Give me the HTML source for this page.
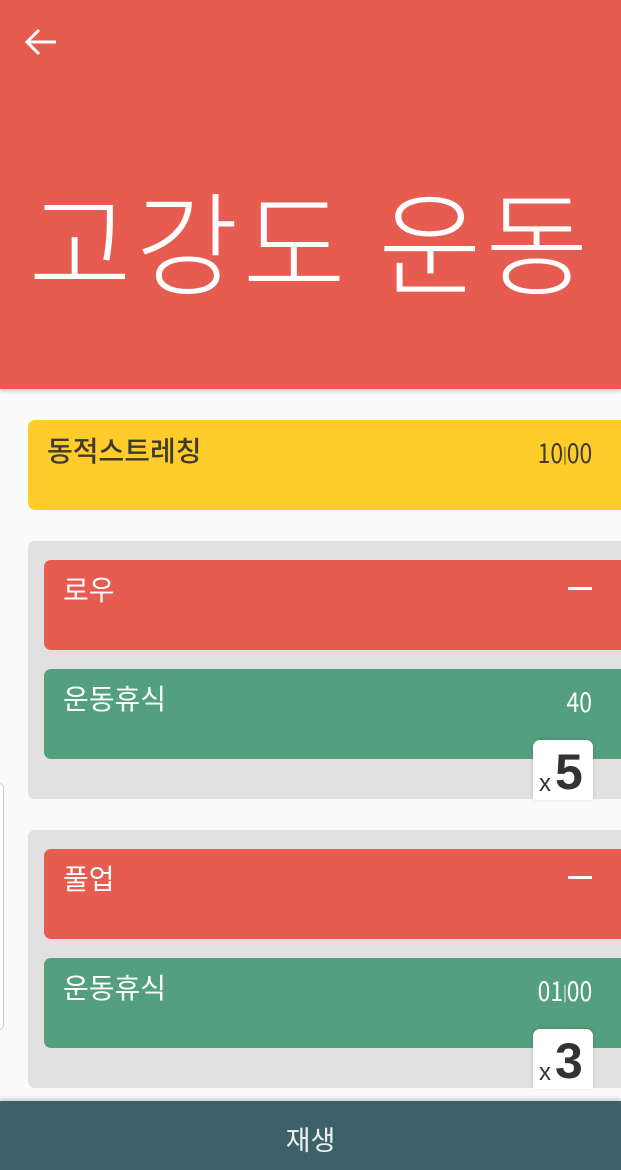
<!DOCTYPE html>
<html><head><meta charset="utf-8"><style>
*{margin:0;padding:0;box-sizing:border-box}
html,body{width:621px;height:1170px;overflow:hidden}
body{background:#fafafa;font-family:"Liberation Sans","Noto Sans CJK KR",sans-serif;position:relative}
.hdr{position:absolute;left:0;top:0;width:621px;height:389px;background:#e65c50;box-shadow:0 2px 4px rgba(0,0,0,.2)}
.title{position:absolute;left:0;width:621px;top:168px;text-align:center;color:#fff;font-size:112px;font-weight:300;line-height:140px;letter-spacing:4px;font-family:"Noto Sans CJK KR",sans-serif}
.card{position:absolute;border-radius:7px;color:#fff;font-size:28px;font-family:"Noto Sans CJK KR",sans-serif}
.card .n{position:absolute;left:19px;top:9px;font-weight:400}
.card .t{position:absolute;right:28px;top:12px;font-size:27px;font-weight:400;font-family:"Liberation Sans Narrow","Noto Sans CJK KR",sans-serif;transform:scaleX(.85);transform-origin:right}
.grp{position:absolute;left:28px;width:600px;height:258px;background:#e1e1e1;border-radius:7px}
.badge{position:absolute;left:533px;width:60px;height:60px;background:#fff;border-radius:7px 7px 0 0;box-shadow:0 -1px 4px rgba(0,0,0,.15);color:#333;font-family:"Liberation Sans",sans-serif}
.badge .x{position:absolute;left:6px;bottom:2px;font-size:24px}
.badge .d{position:absolute;left:22px;bottom:0px;font-size:50px;font-weight:bold;line-height:56px}
.dash{position:absolute;right:28px;top:27px;width:24px;height:3px;background:#fff}
</style></head><body>
<div class="hdr">
<svg style="position:absolute;left:24px;top:28px" width="34" height="28" viewBox="0 0 34 28"><path d="M32 14H3M15 2L3 14l12 12" stroke="#fff" stroke-width="3" fill="none"/></svg>
<div class="title">고강도 운동</div>
</div>
<div class="card" style="left:28px;top:420px;width:600px;height:90px;background:#fecd2c;color:#3e3a2c"><span class="n" style="top:10px;font-weight:500">동적스트레칭</span><span class="t" style="right:36px;top:12px">10<span style="font-size:16px;vertical-align:3px">|</span>00</span></div>
<div class="grp" style="top:541px"></div>
<div class="card" style="left:44px;top:560px;width:590px;height:90px;background:#e65c50"><span class="n">로우</span><div class="dash" style="right:42px"></div></div>
<div class="card" style="left:44px;top:669px;width:590px;height:90px;background:#54a07e"><span class="n">운동휴식</span><span class="t" style="right:42px">40</span></div>
<div class="badge" style="top:740px"><span class="x">x</span><span class="d">5</span></div>
<div class="grp" style="top:830px"></div>
<div class="card" style="left:44px;top:849px;width:590px;height:90px;background:#e65c50"><span class="n">풀업</span><div class="dash" style="right:42px"></div></div>
<div class="card" style="left:44px;top:958px;width:590px;height:90px;background:#54a07e"><span class="n">운동휴식</span><span class="t" style="right:42px">01<span style="font-size:16px;vertical-align:3px">|</span>00</span></div>
<div class="badge" style="top:1029px"><span class="x">x</span><span class="d">3</span></div>
<div style="position:absolute;left:-6px;top:783px;width:10px;height:247px;border:1px solid #ccc;border-radius:6px;background:#fff"></div>
<div style="position:absolute;left:0;top:1101px;width:621px;height:69px;background:#3a6268;box-shadow:0 -2px 4px rgba(0,0,0,.2);color:#f0f0f0;text-align:center;font-size:27px;line-height:76px;font-family:'Noto Sans CJK KR',sans-serif">재생</div>
</body></html>
